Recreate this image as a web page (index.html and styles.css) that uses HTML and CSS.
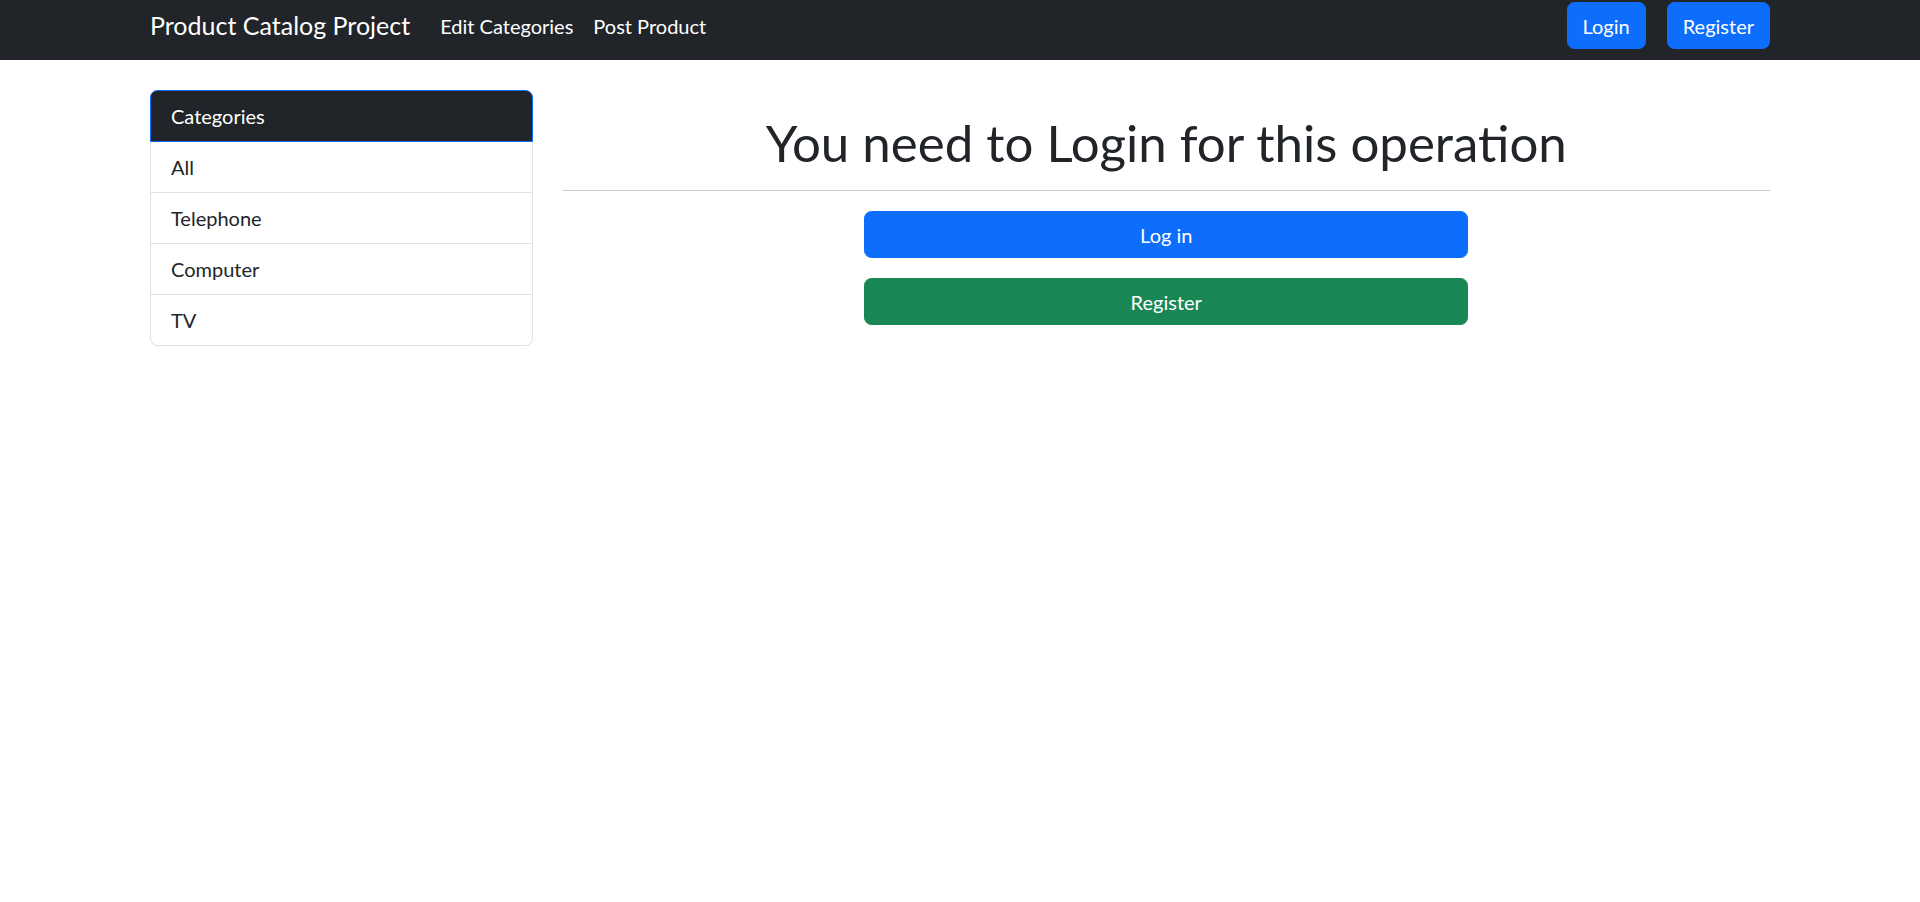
FILE: index.html
```html
<!DOCTYPE html>
<html lang="en">
<head>
<meta charset="utf-8">
<title>Product Catalog Project</title>
<link rel="stylesheet" href="styles.css">
</head>
<body>
<nav class="navbar">
  <div class="nav-inner">
    <a class="brand" href="#">Product Catalog Project</a>
    <ul class="nav-links">
      <li><a class="nav-link" href="#">Edit Categories</a></li>
      <li><a class="nav-link" href="#">Post Product</a></li>
    </ul>
    <div class="nav-actions">
      <a class="btn btn-primary" href="#">Login</a>
      <a class="btn btn-primary" href="#">Register</a>
    </div>
  </div>
</nav>
<div class="page">
  <aside class="sidebar">
    <div class="list-group">
      <div class="list-item list-header">Categories</div>
      <a class="list-item" href="#">All</a>
      <a class="list-item" href="#">Telephone</a>
      <a class="list-item" href="#">Computer</a>
      <a class="list-item" href="#">TV</a>
    </div>
  </aside>
  <main class="main">
    <h1 class="title">You need to Login for this operation</h1>
    <hr class="divider">
    <div class="actions">
      <a class="btn btn-primary btn-block" href="#">Log in</a>
      <a class="btn btn-success btn-block" href="#">Register</a>
    </div>
  </main>
</div>
</body>
</html>
```
FILE: styles.css
```css
* { box-sizing: border-box; }
html, body { margin: 0; padding: 0; }
body {
  font-family: Lato, "Noto Sans", sans-serif;
  font-size: 20px;
  line-height: 30px;
  color: #212529;
  background: #fff;
}
a { text-decoration: none; color: inherit; }

.navbar {
  background: #212529;
  height: 60px;
}
.nav-inner {
  width: 1620px;
  margin: 0 auto;
  display: flex;
  align-items: flex-start;
  padding-top: 2px;
}
.brand {
  color: #fff;
  font-size: 25px;
  line-height: 37.5px;
  padding: 5px 0;
  margin-right: 20px;
}
.nav-links {
  list-style: none;
  margin: 0;
  padding: 0;
  display: flex;
}
.nav-link {
  display: block;
  color: #fff;
  padding: 8.5px 10px;
  line-height: 30px;
}
.nav-actions {
  margin-left: auto;
  display: flex;
  gap: 21px;
}
.btn {
  display: inline-block;
  font-size: 20px;
  line-height: 30px;
  padding: 7.5px 15px;
  border: 1px solid transparent;
  border-radius: 7.5px;
  color: #fff;
  text-align: center;
}
.btn-primary { background: #0d6efd; border-color: #0d6efd; }
.btn-success { background: #198754; border-color: #198754; }

.page {
  width: 1620px;
  margin: 30px auto 0;
  display: grid;
  grid-template-columns: 382.5px 1207.5px;
  column-gap: 30px;
  align-items: start;
}
.list-group {
  display: flex;
  flex-direction: column;
  border-radius: 7.5px;
}
.list-item {
  display: block;
  padding: 10px 20px;
  line-height: 30px;
  border: 1px solid #dee2e6;
  border-top-width: 0;
  color: #212529;
}
.list-item:last-child { border-radius: 0 0 7.5px 7.5px; }
.list-header {
  background: #212529;
  color: #fff;
  border: 1px solid #0d6efd;
  padding-bottom: 9.5px;
  border-radius: 7.5px 7.5px 0 0;
}

.title {
  margin: 23px 0 0;
  font-size: 51px;
  line-height: 60px;
  font-weight: 400;
  text-align: center;
  color: #212529;
}
.divider {
  margin: 17px 0 20px;
  border: 0;
  border-top: 1px solid #c8c9ca;
}
.actions {
  width: 604px;
  margin: 0 auto;
  display: flex;
  flex-direction: column;
  gap: 20px;
}
.btn-block { display: block; width: 100%; }
```
